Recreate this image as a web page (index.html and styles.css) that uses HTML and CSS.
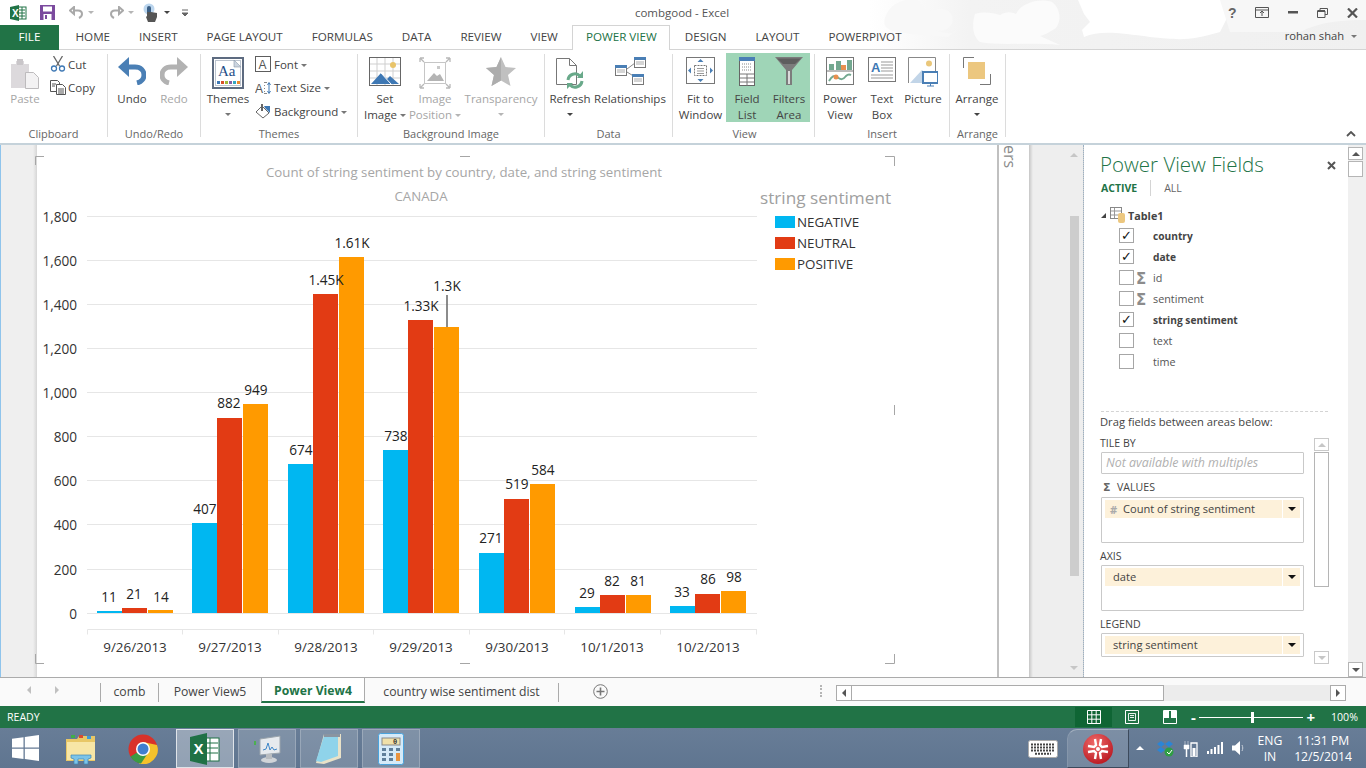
FILE: index.html
```html
<!DOCTYPE html>
<html lang="en">
<head>
    <meta charset="UTF-8">
    <title>combgood - Excel</title>
    <link rel="stylesheet" href="styles.css">
</head>
<body>
    <!-- title bar -->
    <div class="titlebar">
        <svg class="clouds" width="496" height="49" viewBox="870 0 496 49">
            <defs>
                <linearGradient id="fade" x1="0" x2="1" y1="0" y2="0">
                    <stop offset="0" stop-color="#f3f3f3" stop-opacity="0"/>
                    <stop offset="0.2" stop-color="#f3f3f3"/>
                    <stop offset="1" stop-color="#f0f0f0"/>
                </linearGradient>
            </defs>
            <rect x="870" y="0" width="496" height="49" fill="url(#fade)"/>
            <path d="M885 18C890 2 905-2 918 0C922 6 925 9 930 11C940 7 950 9 952 16C955 28 945 31 935 31C950 34 955 34 956 30L948 37C930 36 905 34 893 31C885 28 883 24 885 18Z" fill="#f8f8f8"/>
            <path d="M975 14C985 11 992 13 1000 15C1006 11 1012 12 1016 14C1022 2 1040-2 1052 2C1060 8 1062 20 1056 28C1050 32 1044 35 1040 36L1060 45C1030 42 1000 46 980 42C972 36 972 24 975 14Z" fill="#fbfbfb"/>
            <path d="M1078 0L1084 14L1090 22L1082 30L1084 37C1100 30 1120 33 1150 37C1180 40 1190 41 1220 32L1236 0Z" fill="#fff"/>
            <path d="M1220 0H1366V20C1340 20 1320 22 1300 32L1230 32Z" fill="#f7f7f7"/>
        </svg>
        <div class="qat">
            <svg class="qat-xl" width="17" height="16" viewBox="0 0 17 16"><rect x="7" y="2" width="9" height="12" fill="#fff" stroke="#217346"/><path d="M9 5h6M9 8h6M9 11h6M12 2v12" stroke="#217346"/><path d="M0 2l9-2v16l-9-2z" fill="#217346"/><text x="2" y="11.500" class="qat-x">X</text></svg>
            <svg class="qat-save" width="15" height="15" viewBox="0 0 15 15"><path d="M0 0h15v15H0z" fill="#7b4a9e"/><rect x="3" y="1.500" width="9" height="5" fill="#fff"/><rect x="3.500" y="9" width="8" height="6" fill="#fff"/><rect x="5" y="10" width="2" height="4" fill="#7b4a9e"/></svg>
            <svg class="qat-undo" width="15" height="13" viewBox="0 0 15 13"><path d="M5 1L1 4.500 5 8zM4 4.500h5c3 0 4 2 4 3.500s-1 3-3 4" fill="none" stroke="#a9a9a9" stroke-width="2"/></svg>
            <span class="qat-caret"></span>
            <svg class="qat-redo" width="15" height="13" viewBox="0 0 15 13"><path d="M10 1l4 3.500L10 8zM11 4.500H6C3 4.500 2 6.500 2 8s1 3 3 4" fill="none" stroke="#a9a9a9" stroke-width="2"/></svg>
            <span class="qat-caret"></span>
            <svg class="qat-touch" width="14" height="19" viewBox="0 0 14 19"><circle cx="6" cy="6" r="5.500" fill="#bcd6ee"/><rect x="4" y="3" width="4" height="9" rx="2" fill="#3b5f85"/><path d="M4 9v4l-1 1 2 5h7l2-5v-4l-6-1z" fill="#555"/></svg>
            <span class="qat-caret dark"></span>
            <svg class="qat-more" width="8" height="8" viewBox="0 0 8 8"><path d="M1 1h6M1 4h6l-3 3z" fill="#666" stroke="#666"/></svg>
        </div>
        <div class="doc-title">combgood - Excel</div>
        <div class="winbtns">
            <span class="help">?</span>
            <svg width="14" height="11" viewBox="0 0 14 11"><path d="M.5.500h13v10H.5zM.5 3h13" fill="none" stroke="#555"/><path d="M7 9V4M5 6l2-2 2 2" fill="none" stroke="#555"/></svg>
            <svg width="10" height="3" viewBox="0 0 10 3"><path d="M0 0h10v2.500H0z" fill="#555"/></svg>
            <svg width="11" height="10" viewBox="0 0 11 10"><path d="M3 2.500V.500h7.500v6H8M.5 3h7.500v6.500H.5z" fill="none" stroke="#555"/><path d="M.5 3h7.500" stroke="#555" stroke-width="2"/></svg>
            <svg width="11" height="10" viewBox="0 0 11 10"><path d="M1 .500l9 9M10 .500l-9 9" stroke="#555" stroke-width="2.200"/></svg>
        </div>
    </div>

    <!-- ribbon tabs -->
    <div class="tabs">
        <div class="tab file">FILE</div>
        <div class="tab">HOME</div>
        <div class="tab">INSERT</div>
        <div class="tab">PAGE LAYOUT</div>
        <div class="tab">FORMULAS</div>
        <div class="tab">DATA</div>
        <div class="tab">REVIEW</div>
        <div class="tab">VIEW</div>
        <div class="tab active">POWER VIEW</div>
        <div class="tab">DESIGN</div>
        <div class="tab">LAYOUT</div>
        <div class="tab">POWERPIVOT</div>
        <div class="user">rohan shah <span class="caret"></span></div>
    </div>

    <!-- ribbon -->
    <div class="ribbon">
        <div class="rgroup g-clip">
            <div class="rbtns">
                <div class="rbig w50 off">
                    <svg class="ic" width="30" height="32" viewBox="0 0 30 32"><path d="M1 7h5V4h8v3h5v24H1z" fill="#dcd9dc"/><rect x="7" y="2" width="6" height="6" fill="#c9c6c9"/><path d="M15.500 15.500h8l5 5v11h-13z" fill="#f3f2f3" stroke="#bdbbbd"/></svg>
                    <span>Paste</span>
                </div>
                <div class="rsmall-col">
                    <div class="rsmall">
                        <svg width="15" height="16" viewBox="0 0 15 16"><path d="M3 0l6 10M12 0L6 10" stroke="#666" stroke-width="1.300"/><circle cx="3.500" cy="12.500" r="2.500" fill="none" stroke="#3e78b4" stroke-width="1.300"/><circle cx="11.500" cy="12.500" r="2.500" fill="none" stroke="#3e78b4" stroke-width="1.300"/></svg>
                        <span>Cut</span>
                    </div>
                    <div class="rsmall">
                        <svg width="16" height="15" viewBox="0 0 16 15"><path d="M.5.500h7l2 2v9h-9z" fill="#fff" stroke="#555"/><path d="M6.500 4.500h6l3 3v7h-9z" fill="#fff" stroke="#555"/><path d="M2 4h4M2 6h3M8 9h6M8 11h6M8 13h6" stroke="#555"/></svg>
                        <span>Copy</span>
                    </div>
                </div>
            </div>
            <div class="rlabel">Clipboard</div>
        </div>

        <div class="rgroup g-undo">
            <div class="rbtns">
                <div class="rbig w48">
                    <svg class="ic" width="28" height="28" viewBox="0 0 28 28"><path d="M0 10L11 0v20z" fill="#4a7fb5"/><path d="M10 10h7c6 0 9 4 9 8s-3 7-7 8" fill="none" stroke="#4a7fb5" stroke-width="5"/></svg>
                    <span>Undo</span>
                </div>
                <div class="rbig w36 off">
                    <svg class="ic" width="28" height="28" viewBox="0 0 28 28"><path d="M28 10L17 0v20z" fill="#b2b2b2"/><path d="M18 10h-7c-6 0-9 4-9 8s3 7 7 8" fill="none" stroke="#b2b2b2" stroke-width="5"/></svg>
                    <span>Redo</span>
                </div>
            </div>
            <div class="rlabel">Undo/Redo</div>
        </div>

        <div class="rgroup g-themes">
            <div class="rbtns">
                <div class="rbig w54">
                    <svg class="ic" width="32" height="32" viewBox="0 0 32 32"><rect x="1" y="1" width="30" height="30" fill="#fff" stroke="#5d6b80" stroke-width="2"/><rect x="3.500" y="3.500" width="25" height="25" fill="none" stroke="#bcc4cf"/><path d="M22 3l7 7h-7z" fill="#ccd5e0" stroke="#8b98aa" stroke-width=".6"/><text x="6" y="19" class="ic-aa">Aa</text><path d="M5 24h3v3H5z" fill="#3e78b4"/><path d="M9 24h3v3H9z" fill="#d84f2a"/><path d="M13 24h3v3h-3z" fill="#9fb83a"/><path d="M17 24h3v3h-3z" fill="#8360a8"/><path d="M21 24h3v3h-3z" fill="#36a6c0"/><path d="M25 24h3v3h-3z" fill="#ea8a2e"/></svg>
                    <span>Themes</span>
                    <i class="caret"></i>
                </div>
                <div class="rsmall-col">
                    <div class="rsmall">
                        <svg width="16" height="16" viewBox="0 0 16 16"><rect x=".5" y=".5" width="15" height="15" fill="#fff" stroke="#5d5d5d"/><text x="3.500" y="12.500" class="ic-a">A</text></svg>
                        <span>Font<i class="caret"></i></span>
                    </div>
                    <div class="rsmall">
                        <svg width="16" height="14" viewBox="0 0 16 14"><text x="0" y="11.500" class="ic-a">A</text><path d="M9 1.500h3M9 12.500h3M9.500 4v1M9.500 7v1M9.500 10v1" stroke="#888"/><path d="M14 2v10M12.500 4L14 1.500 15.500 4M12.500 10l1.500 2.500 1.500-2.500" fill="none" stroke="#3e78b4"/></svg>
                        <span>Text Size<i class="caret"></i></span>
                    </div>
                    <div class="rsmall">
                        <svg width="16" height="16" viewBox="0 0 16 16"><path d="M1 9l6-6 7 7-6 5z" fill="#fff" stroke="#666"/><path d="M6 1h2v7H6z" fill="#666"/><path d="M9 3h6v7l-5-5z" fill="#3e78b4"/></svg>
                        <span>Background<i class="caret"></i></span>
                    </div>
                </div>
            </div>
            <div class="rlabel">Themes</div>
        </div>

        <div class="rgroup g-bg">
            <div class="rbtns">
                <div class="rbig w54">
                    <svg class="ic" width="32" height="30" viewBox="0 0 32 30"><rect x=".5" y=".5" width="31" height="28" fill="#fff" stroke="#666"/><path d="M1 7h30M1 14h30M1 21h30M8 1v27M16 1v27M24 1v27" stroke="#cfcfcf"/><circle cx="24" cy="8" r="3" fill="#e9c46a"/><path d="M2 27l10-11 6 6 3-3 9 8z" fill="#3e78b4"/><path d="M12 16l10 11" stroke="#fff"/></svg>
                    <span>Set<br>Image<i class="caret"></i></span>
                </div>
                <div class="rbig w46 off">
                    <svg class="ic" width="32" height="32" viewBox="0 0 32 32"><rect x="5.500" y="5.500" width="21" height="21" fill="#fff" stroke="#c6c6c6"/><path d="M8 24l7-8 3 3 3-2 4 7z" fill="#b4b4b4"/><rect x="18" y="9" width="3" height="3" fill="#c9c9c9"/><path d="M1 1l4 4M1 1h4M1 1v4M31 1l-4 4M31 1h-4M31 1v4M1 31l4-4M1 31h4M1 31v-4M31 31l-4-4M31 31h-4M31 31v-4" stroke="#b8b8b8" stroke-width="1.300"/></svg>
                    <span>Image<br>Position<i class="caret"></i></span>
                </div>
                <div class="rbig w86 off">
                    <svg class="ic" width="30" height="30" viewBox="0 0 30 30"><path d="M15 0l4.500 10L30 11l-8 7 2.500 11L15 23.500 5.500 29 8 18 0 11l10.500-1z" fill="#c0c0c0"/><path d="M15 0v23.500L5.500 29 8 18 0 11l10.500-1z" fill="#adadad"/></svg>
                    <span>Transparency</span>
                    <i class="caret"></i>
                </div>
            </div>
            <div class="rlabel">Background Image</div>
        </div>

        <div class="rgroup g-data">
            <div class="rbtns">
                <div class="rbig w50">
                    <svg class="ic" width="30" height="32" viewBox="0 0 30 32"><path d="M1.500 1.500h13l7 7v19h-20z" fill="#fff" stroke="#777"/><path d="M14.500 1.500v7h7" fill="none" stroke="#777"/><path d="M13 23a7 7 0 0 1 12-4M27 24a7 7 0 0 1-12 4" fill="none" stroke="#69a98a" stroke-width="3"/><path d="M28 14v7h-6zM12 32v-6h6z" fill="#69a98a"/></svg>
                    <span>Refresh</span>
                    <i class="caret dark"></i>
                </div>
                <div class="rbig w70">
                    <svg class="ic" width="31" height="28" viewBox="0 0 31 28"><path d="M12 12l8-6M12 15l8 5" stroke="#888" fill="none"/><rect x=".5" y="8.500" width="11" height="10" fill="#fff" stroke="#777"/><rect x="0" y="8" width="12" height="3" fill="#4a7fb5"/><rect x="19.500" y=".5" width="11" height="10" fill="#fff" stroke="#777"/><rect x="19" y="0" width="12" height="3" fill="#4a7fb5"/><rect x="17.500" y="17.500" width="11" height="10" fill="#fff" stroke="#777"/><rect x="17" y="17" width="12" height="3" fill="#4a7fb5"/><path d="M2 13h8M2 15h8M21 5h8M21 7h8M19 22h8M19 24h8" stroke="#aaa"/></svg>
                    <span>Relationships</span>
                </div>
            </div>
            <div class="rlabel">Data</div>
        </div>

        <div class="rgroup g-view">
            <div class="rbtns">
                <div class="rbig w51">
                    <svg class="ic" width="30" height="28" viewBox="0 0 30 28"><rect x=".5" y=".5" width="28" height="26" fill="#fff" stroke="#777"/><rect x="8.500" y="8.500" width="12" height="10" fill="#fff" stroke="#777" stroke-dasharray="2 1"/><path d="M11 11.500h7M11 14h7M11 16.500h7" stroke="#999"/><path d="M14.500 2l3 3h-6zM14.500 25l3-3h-6zM2 13.500l3-3v6zM27 13.500l-3-3v6z" fill="#4a7fb5"/></svg>
                    <span>Fit to<br>Window</span>
                </div>
                <div class="rhl">
                    <div class="rbig w42">
                        <svg class="ic" width="16" height="29" viewBox="0 0 16 29"><rect x=".5" y=".5" width="15" height="28" fill="#fff" stroke="#666"/><rect x="0" y="0" width="16" height="4" fill="#4a7fb5"/><path d="M3 7h10M3 10h10M3 13h10" stroke="#888" stroke-dasharray="1 1"/><path d="M1 17h14M1 21h14M1 25h14M8 17v12" stroke="#777"/></svg>
                        <span>Field<br>List</span>
                    </div>
                    <div class="rbig w42">
                        <svg class="ic" width="28" height="28" viewBox="0 0 28 28"><path d="M0 0h28L17 13v15h-6V13z" fill="#7c7c7c"/><path d="M2 1.500h24L20 7H8z" fill="#5e5e5e"/><rect x="13" y="14" width="2" height="13" fill="#d9d9d9"/></svg>
                        <span>Filters<br>Area</span>
                    </div>
                </div>
            </div>
            <div class="rlabel">View</div>
        </div>

        <div class="rgroup g-insert">
            <div class="rbtns">
                <div class="rbig w50">
                    <svg class="ic" width="28" height="28" viewBox="0 0 28 28"><rect x=".5" y=".5" width="27" height="27" fill="#fff" stroke="#777"/><path d="M1 14h26" stroke="#777"/><rect x="3" y="7" width="5" height="6" fill="#73a890"/><rect x="10" y="4" width="5" height="9" fill="#73a890"/><rect x="15" y="8" width="5" height="5" fill="#e98f4f"/><rect x="21" y="3" width="5" height="10" fill="#73a890"/><path d="M3 24c3-5 5-6 8-4 4 3 6 3 9-1 2-2 3-2 5-1" fill="none" stroke="#73a890" stroke-width="2"/><circle cx="10" cy="20" r="2.500" fill="#e98f4f"/></svg>
                    <span>Power<br>View</span>
                </div>
                <div class="rbig w34">
                    <svg class="ic" width="28" height="26" viewBox="0 0 28 26"><rect x=".5" y=".5" width="27" height="24" fill="#fff" stroke="#777"/><text x="3" y="14.500" class="ic-boxa">A</text><path d="M13 5h12M13 8h12M13 11h12M13 14h12M3 18h22M3 21h22" stroke="#999"/></svg>
                    <span>Text<br>Box</span>
                </div>
                <div class="rbig w48">
                    <svg class="ic" width="30" height="30" viewBox="0 0 30 30"><path d="M.5 26V.5h27V15" fill="none" stroke="#888"/><circle cx="21" cy="6.500" r="3" fill="#eac77a"/><path d="M2 26l12-13 5 5v8z" fill="#c2d5e8"/><rect x="15" y="15" width="15" height="11" fill="#fff" stroke="#4a7fb5" stroke-width="2"/><path d="M22.500 26v3M19 29h7" stroke="#4a7fb5"/></svg>
                    <span>Picture</span>
                </div>
            </div>
            <div class="rlabel">Insert</div>
        </div>

        <div class="rgroup g-arrange">
            <div class="rbtns">
                <div class="rbig w54">
                    <svg class="ic" width="28" height="28" viewBox="0 0 28 28"><path d="M.5 11V.5H11M17 27.500h10.500V17" fill="none" stroke="#777"/><rect x="5" y="5" width="17" height="17" fill="#ecc77f"/></svg>
                    <span>Arrange</span>
                    <i class="caret dark"></i>
                </div>
            </div>
            <div class="rlabel">Arrange</div>
        </div>

        <svg class="collapse" width="10" height="6" viewBox="0 0 10 6"><path d="M1 5l4-4 4 4" fill="none" stroke="#555" stroke-width="1.800"/></svg>
    </div>

    <!-- power view sheet -->
    <div class="workspace">
        <div class="strip-left"></div>
        <div class="canvas">
            <svg class="chart" width="960" height="535" viewBox="37 143 960 535">
                <text x="464" y="177" class="c-title">Count of string sentiment by country, date, and string sentiment</text>
                <text x="421" y="201" class="c-title">CANADA</text>

                <g class="grid">
                    <path d="M87 216.500H757M87 260.500H757M87 304.500H757M87 348.500H757M87 392.500H757M87 436.500H757M87 480.500H757M87 524.500H757M87 569.500H757M87 613.500H757"/>
                    <path d="M87.500 629.500H757M87.500 629.500v5M182.500 629.500v5M278.500 629.500v5M373.500 629.500v5M469.500 629.500v5M564.500 629.500v5M660.500 629.500v5M756.500 629.500v5"/>
                </g>

                <g class="yaxis">
                    <text x="77" y="222">1,800</text>
                    <text x="77" y="266">1,600</text>
                    <text x="77" y="310">1,400</text>
                    <text x="77" y="354">1,200</text>
                    <text x="77" y="398">1,000</text>
                    <text x="77" y="442">800</text>
                    <text x="77" y="486">600</text>
                    <text x="77" y="530">400</text>
                    <text x="77" y="575">200</text>
                    <text x="77" y="619">0</text>
                </g>

                <g class="neg">
                    <rect x="97" y="611" width="25" height="2"/>
                    <rect x="192" y="523" width="25" height="90"/>
                    <rect x="288" y="464" width="25" height="149"/>
                    <rect x="383" y="450" width="25" height="163"/>
                    <rect x="479" y="553" width="25" height="60"/>
                    <rect x="575" y="607" width="25" height="6"/>
                    <rect x="670" y="606" width="25" height="7"/>
                </g>
                <g class="neu">
                    <rect x="122" y="608" width="25" height="5"/>
                    <rect x="217" y="418" width="25" height="195"/>
                    <rect x="313" y="294" width="25" height="319"/>
                    <rect x="408" y="320" width="25" height="293"/>
                    <rect x="504" y="499" width="25" height="114"/>
                    <rect x="600" y="595" width="25" height="18"/>
                    <rect x="695" y="594" width="25" height="19"/>
                </g>
                <g class="pos">
                    <rect x="148" y="610" width="25" height="3"/>
                    <rect x="243" y="404" width="25" height="209"/>
                    <rect x="339" y="257" width="25" height="356"/>
                    <rect x="434" y="327" width="25" height="286"/>
                    <rect x="530" y="484" width="25" height="129"/>
                    <rect x="626" y="595" width="25" height="18"/>
                    <rect x="721" y="591" width="25" height="22"/>
                </g>
                <path class="leader" d="M447 295V327"/>

                <g class="vals">
                    <text x="109" y="602">11</text>
                    <text x="134" y="599">21</text>
                    <text x="161" y="602">14</text>
                    <text x="205" y="514">407</text>
                    <text x="229" y="408">882</text>
                    <text x="256" y="395">949</text>
                    <text x="301" y="455">674</text>
                    <text x="326" y="285">1.45K</text>
                    <text x="352" y="248">1.61K</text>
                    <text x="396" y="441">738</text>
                    <text x="421" y="311">1.33K</text>
                    <text x="447" y="291">1.3K</text>
                    <text x="491" y="543">271</text>
                    <text x="517" y="489">519</text>
                    <text x="543" y="475">584</text>
                    <text x="587" y="598">29</text>
                    <text x="612" y="586">82</text>
                    <text x="638" y="586">81</text>
                    <text x="682" y="597">33</text>
                    <text x="708" y="584">86</text>
                    <text x="734" y="582">98</text>
                </g>

                <g class="xaxis">
                    <text x="135" y="652">9/26/2013</text>
                    <text x="230" y="652">9/27/2013</text>
                    <text x="326" y="652">9/28/2013</text>
                    <text x="421" y="652">9/29/2013</text>
                    <text x="517" y="652">9/30/2013</text>
                    <text x="612" y="652">10/1/2013</text>
                    <text x="708" y="652">10/2/2013</text>
                </g>

                <text x="760" y="204" class="l-title">string sentiment</text>
                <rect class="neg" x="775" y="216" width="20" height="12"/>
                <rect class="neu" x="775" y="237" width="20" height="12"/>
                <rect class="pos" x="775" y="258" width="20" height="12"/>
                <text x="797" y="227" class="l-item">NEGATIVE</text>
                <text x="797" y="248" class="l-item">NEUTRAL</text>
                <text x="797" y="269" class="l-item">POSITIVE</text>

                <path class="marks" d="M44 156.500H35.500V165M460 156.500H470M885 156.500H894.500V166M894.500 405V415M885 663.500H894.500V654M460 663.500H470M44 663.500H35.500V654"/>
            </svg>
        </div>
        <div class="filters"><span class="filters-label">ers</span></div>
        <div class="view-scroll">
            <i class="arrow up"></i>
            <div class="view-thumb"></div>
            <i class="arrow down"></i>
        </div>
        <div class="fields">
            <div class="fields-head">
                <div class="fields-title">Power View Fields</div>
                <svg class="fields-close" width="9" height="9" viewBox="0 0 9 9"><path d="M1 1l7 7M8 1L1 8" stroke="#555" stroke-width="2"/></svg>
            </div>
            <div class="fields-tabs"><span class="ft-on">ACTIVE</span><span class="ft-off">ALL</span></div>
            <div class="tree-head">
                <i class="tree-caret"></i>
                <svg width="17" height="16" viewBox="0 0 17 16"><rect x=".5" y=".5" width="11" height="11" fill="#fff" stroke="#888"/><path d="M1 4h10M1 8h10M4.500 1v10" stroke="#999"/><rect x="8" y="6" width="7" height="10" rx="2" fill="#ecc77f"/></svg>
                <span>Table1</span>
            </div>
            <div class="field-list">
                <div class="field on"><i class="cb">✓</i><i class="sig"></i><span>country</span></div>
                <div class="field on"><i class="cb">✓</i><i class="sig"></i><span>date</span></div>
                <div class="field"><i class="cb"></i><i class="sig">Σ</i><span>id</span></div>
                <div class="field"><i class="cb"></i><i class="sig">Σ</i><span>sentiment</span></div>
                <div class="field on"><i class="cb">✓</i><i class="sig"></i><span>string sentiment</span></div>
                <div class="field"><i class="cb"></i><i class="sig"></i><span>text</span></div>
                <div class="field"><i class="cb"></i><i class="sig"></i><span>time</span></div>
            </div>
            <div class="dash"></div>
            <div class="drag-hint">Drag fields between areas below:</div>
            <div class="areas">
                <div class="wells">
                    <div class="well-label">TILE BY</div>
                    <div class="well well-sm"><em>Not available with multiples</em></div>
                    <div class="well-label vals-label"><i class="sig-sm">Σ</i>VALUES</div>
                    <div class="well well-lg">
                        <div class="chip"><span class="hash">#</span><span class="chip-t">Count of string sentiment</span><i class="chip-c"></i></div>
                    </div>
                    <div class="well-label">AXIS</div>
                    <div class="well well-lg">
                        <div class="chip"><span class="chip-t ind">date</span><i class="chip-c"></i></div>
                    </div>
                    <div class="well-label">LEGEND</div>
                    <div class="well well-md">
                        <div class="chip"><span class="chip-t ind">string sentiment</span><i class="chip-c"></i></div>
                    </div>
                </div>
                <div class="well-scroll">
                    <div class="sbtn"><i class="arrow up"></i></div>
                    <div class="sthumb"></div>
                    <div class="sbtn last"><i class="arrow down"></i></div>
                </div>
            </div>
        </div>
        <div class="outer-scroll">
            <div class="osbtn"><i class="arrow up dark"></i></div>
            <div class="osthumb"></div>
            <div class="osbtn last"><i class="arrow down dark"></i></div>
        </div>
    </div>

    <!-- sheet tabs -->
    <div class="sheetbar">
        <div class="sheet-nav"><i class="nav-l"></i><i class="nav-r"></i></div>
        <div class="stab s-comb">comb</div>
        <div class="stab s-pv5">Power View5</div>
        <div class="stab s-pv4">Power View4</div>
        <div class="stab s-cws">country wise sentiment dist</div>
        <svg class="add-sheet" width="15" height="15" viewBox="0 0 15 15"><circle cx="7.500" cy="7.500" r="6.800" fill="none" stroke="#777"/><path d="M7.500 3.500v8M3.500 7.500h8" stroke="#777" stroke-width="1.600"/></svg>
        <div class="grip"></div>
        <div class="hscroll">
            <div class="hbtn"><i class="nav-l dark"></i></div>
            <div class="hthumb"></div>
            <div class="hbtn end"><i class="nav-r dark"></i></div>
        </div>
    </div>

    <!-- status bar -->
    <div class="statusbar">
        <span class="ready">READY</span>
        <div class="vbtn active">
            <svg width="14" height="14" viewBox="0 0 14 14"><path d="M.5.500h13v13H.5zM.5 4.800h13M.5 9.200h13M4.800.5v13M9.200.5v13" fill="none" stroke="#fff"/></svg>
        </div>
        <div class="vbtn">
            <svg width="14" height="14" viewBox="0 0 14 14"><path d="M.5.500h13v13H.5z" fill="none" stroke="#fff"/><path d="M3.500 3.500h7v7h-7zM5 5.500h4M5 7.500h4" fill="none" stroke="#fff" stroke-width=".9"/></svg>
        </div>
        <div class="vbtn">
            <svg width="14" height="14" viewBox="0 0 14 14"><path d="M.5.500h13v13H.5z" fill="none" stroke="#fff"/><path d="M1 1h5v7H1zM8 1h5v7H8z" fill="#fff"/></svg>
        </div>
        <div class="zoom">
            <span class="z-sign">-</span>
            <div class="z-track"><i class="z-handle"></i></div>
            <span class="z-sign">+</span>
        </div>
        <span class="z-pct">100%</span>
    </div>

    <!-- windows taskbar -->
    <div class="taskbar">
        <svg class="tb-start" width="27" height="26" viewBox="0 0 27 26"><path d="M0 3.800l11.500-1.600v10.300H0zM12.800 2L27 0v12.500H12.800zM0 13.800h11.500v10.300L0 22.500zM12.800 13.800H27V26l-14.200-2z" fill="#fff"/></svg>
        <div class="tb-app t-exp">
            <svg width="32" height="32" viewBox="0 0 32 32"><path d="M1 6h11l2-3h16v25H1z" fill="#e8c766"/><path d="M2 9h28v18H2z" fill="#f7e6a6"/><rect x="6" y="2" width="4" height="3" fill="#3fae49"/><rect x="14" y="2" width="4" height="3" fill="#d84a30"/><rect x="22" y="3" width="4" height="3" fill="#3e9ad6"/><path d="M6 22h20v3l-3 1v5h-4v-5h-6v5H9v-5l-3-1z" fill="#7cc4e8" stroke="#3e86b8" stroke-width=".7"/></svg>
        </div>
        <div class="tb-app t-chr">
            <svg width="30" height="30" viewBox="0 0 30 30"><circle cx="15" cy="15" r="14.500" fill="#d8322a"/><path d="M15 15L2.500 22.500A14.500 14.500 0 0 0 15 29.500z" fill="#3a9b44"/><path d="M15 15l-4 14.500A14.500 14.500 0 0 0 29 11L15 8z" fill="#f4c22b"/><path d="M15 15L2.500 22.500 8 10z" fill="#d8322a"/><path d="M15 15L3 22.500A14.500 14.500 0 0 0 13 29.500l6-9z" fill="#3a9b44"/><circle cx="15" cy="15" r="7" fill="#fff"/><circle cx="15" cy="15" r="5.500" fill="#3f7fd0"/></svg>
        </div>
        <div class="tb-btn active">
            <svg width="30" height="32" viewBox="0 0 30 32"><rect x="13" y="5" width="16" height="23" fill="#fff" stroke="#1f7145"/><path d="M14 10h14M14 15h14M14 20h14M20 5v23" stroke="#1f7145"/><path d="M0 4L17 0v32L0 28z" fill="#1f7145"/><text x="3.500" y="21" class="tb-x">X</text></svg>
        </div>
        <div class="tb-btn">
            <svg width="30" height="32" viewBox="0 0 30 32"><path d="M8 6l20-3v17l-20 2z" fill="#e6eaee" stroke="#9aa4ac"/><path d="M11 17l3-1 2-6 2 7 2-3 2 3 3-1" fill="none" stroke="#3e86c8"/><ellipse cx="17" cy="27" rx="8" ry="3" fill="#d0d4d8"/><rect x="14" y="21" width="6" height="5" fill="#b8bcc0"/><rect x="2" y="8" width="2" height="4" fill="#4caf50"/></svg>
        </div>
        <div class="tb-btn">
            <svg width="30" height="32" viewBox="0 0 30 32"><path d="M10 1h17v24l-17 6-8-1z" fill="#e9e2c8"/><path d="M10 3h14v20L7 29l-5-1z" fill="#8fd3ea"/><path d="M10 1h16v3H10z" fill="#8a94a0"/></svg>
        </div>
        <div class="tb-btn">
            <svg width="26" height="32" viewBox="0 0 26 32"><rect x=".5" y=".5" width="25" height="31" rx="2" fill="#d5eaf8" stroke="#4aa3dc"/><rect x="4" y="5" width="18" height="7" fill="#f0e0a8" stroke="#888"/><text x="15" y="11" class="tb-zero">0</text><path d="M4 15h4v3H4zM11 15h4v3h-4zM18 15h4v3h-4zM4 20h4v3H4zM11 20h4v3h-4zM4 25h4v3H4zM11 25h4v3h-4z" fill="#5f7f9a"/><path d="M18 20h4v8h-4z" fill="#e9943f"/></svg>
        </div>
        <div class="tb-kbd">
            <svg width="30" height="18" viewBox="0 0 30 18"><rect x=".5" y=".5" width="29" height="17" rx="2" fill="#fff" stroke="#aaa"/><path d="M3 4.500h24M3 7.500h24M3 10.500h24M7 13.800h16" stroke="#444" stroke-width="2" stroke-dasharray="2 1"/></svg>
        </div>
        <div class="tb-red">
            <svg width="30" height="30" viewBox="0 0 30 30"><defs><radialGradient id="red" cx=".4" cy=".3" r=".8"><stop offset="0" stop-color="#f06a6a"/><stop offset="1" stop-color="#b5121b"/></radialGradient></defs><circle cx="15" cy="15" r="15" fill="url(#red)"/><path d="M12 5l1 6-2 2-6-1M18 5l-1 6 2 2 6-1M12 25l1-6-2-2-6 1M18 25l-1-6 2-2 6 1" fill="none" stroke="#fff" stroke-width="2.400"/><circle cx="15" cy="15" r="2" fill="#fff"/></svg>
        </div>
        <div class="tray">
            <i class="tray-up"></i>
            <svg width="17" height="17" viewBox="0 0 17 17"><path d="M4 1l4 3-4 3-4-3zM12 1l4 3-4 3-4-3zM4 7l4 3-4 3-4-3zM12 7l4 3-4 3-4-3z" fill="#2b85d6"/><circle cx="12" cy="12" r="4.500" fill="#2f9e44"/><path d="M10 12l2 2 3-4" fill="none" stroke="#fff"/></svg>
            <svg width="15" height="17" viewBox="0 0 15 17"><path d="M2 1v4M5 1v4M1 5h5v4H4v8H3V9H1z" fill="#fff" stroke="#fff" stroke-width=".5"/><path d="M8 3h6v14H8z" fill="none" stroke="#fff" stroke-width="1.300"/><path d="M9.500 8h3v8h-3z" fill="#fff"/></svg>
            <svg width="16" height="12" viewBox="0 0 16 12"><path d="M0 9h2v3H0zM3.500 7h2v5h-2zM7 5h2v7H7zM10.500 3h2v9h-2zM14 0h2v12h-2z" fill="#fff"/></svg>
            <svg width="12" height="14" viewBox="0 0 12 14"><path d="M0 4.500h3L8 0v14L3 9.500H0z" fill="#fff"/><path d="M10 4c1 2 1 4 0 6" fill="none" stroke="#c8d0da"/></svg>
        </div>
        <div class="lang">ENG<br>IN</div>
        <div class="clock">11:31 PM<br>12/5/2014</div>
    </div>
</body>
</html>
```

FILE: styles.css
```css
* {
    box-sizing: border-box;
}
html, body {
    margin: 0;
    padding: 0;
}
body {
    width: 1366px;
    height: 768px;
    overflow: hidden;
    display: flex;
    flex-direction: column;
    font-family: "Open Sans", "Noto Sans", sans-serif;
    font-size: 11.5px;
    color: #444;
    background: #fff;
}
i {
    font-style: normal;
}

/* title bar */
.titlebar {
    height: 25px;
    position: relative;
    display: flex;
    align-items: center;
    flex: none;
}
.clouds {
    position: absolute;
    left: 870px;
    top: 0;
}
.qat {
    display: flex;
    align-items: center;
    position: relative;
    padding-left: 10px;
    width: 400px;
}
.qat-x { font: bold 10px "Liberation Sans", sans-serif; fill: #fff; }
.qat-save { margin-left: 13px; }
.qat-undo { margin-left: 14px; }
.qat-redo { margin-left: 15px; }
.qat-touch { margin-left: 9px; }
.qat-more { margin-left: 11px; }
.qat-caret {
    margin-left: 4px;
    border-left: 3px solid transparent;
    border-right: 3px solid transparent;
    border-top: 3px solid #b5b5b5;
}
.qat-caret.dark { border-top-color: #444; margin-left: 7px; }
.doc-title {
    position: relative;
    width: 564px;
    text-align: center;
    font-size: 11.5px;
    color: #555;
}
.winbtns {
    position: absolute;
    right: 8px;
    top: 6px;
    display: flex;
    align-items: center;
    justify-content: space-between;
    width: 130px;
    height: 13px;
}
.help { font: bold 14px "Liberation Sans", sans-serif; color: #666; }

/* ribbon tabs */
.tabs {
    height: 25px;
    flex: none;
    display: flex;
    position: relative;
    border-bottom: 1px solid #d4d4d4;
}
.tab {
    height: 25px;
    padding: 3px 14.5px 0;
    font-size: 11.65px;
    line-height: 18px;
    color: #444;
}
.tab.file {
    width: 59px;
    padding: 3px 0 0;
    text-align: center;
    background: #217346;
    color: #fff;
    margin-right: 2px;
}
.tab.active {
    background: #fff;
    border: 1px solid #d4d4d4;
    border-bottom: none;
    color: #217346;
    padding: 2px 12.5px 0;
}
.user {
    position: absolute;
    right: 9px;
    top: 3px;
    font-size: 11.2px;
    line-height: 16px;
}
.user .caret { margin-left: 4px; vertical-align: 2px; }

/* ribbon */
.ribbon {
    height: 93px;
    flex: none;
    display: flex;
    position: relative;
    align-items: flex-start;
}
.rgroup {
    margin-top: 4px;
    height: 83px;
    border-right: 1px solid #dcdcdc;
    display: flex;
    flex-direction: column;
    flex: none;
}
.g-clip { width: 108px; }
.g-undo { width: 93px; }
.g-themes { width: 157px; }
.g-bg { width: 187px; }
.g-data { width: 128px; }
.g-view { width: 142px; padding-left: 2px; }
.g-insert { width: 135px; }
.g-arrange { width: 56px; }
.rbtns {
    height: 73px;
    display: flex;
}
.rlabel {
    line-height: 14px;
    text-align: center;
    font-size: 11px;
    color: #666;
}
.rbig {
    position: relative;
    height: 73px;
    display: flex;
    flex-direction: column;
    align-items: center;
    flex: none;
    padding-top: 3px;
    line-height: 16px;
    text-align: center;
}
.rbig > span {
    position: absolute;
    top: 37px;
    left: -10px;
    right: -10px;
}
.rbig > .caret {
    position: absolute;
    top: 59px;
    margin: 0;
}
.off { color: #a6a6a6; }
.w34 { width: 34px; }
.w36 { width: 36px; }
.w42 { width: 42px; }
.w46 { width: 46px; }
.w48 { width: 48px; }
.w50 { width: 50px; }
.w51 { width: 51px; }
.w54 { width: 54px; }
.w70 { width: 70px; }
.w86 { width: 86px; }
.rhl {
    display: flex;
    height: 69px;
    margin-top: -1px;
    padding-top: 1px;
    background: #9fd5b7;
}
.rhl .rbig { height: 68px; }
.rsmall-col {
    display: flex;
    flex-direction: column;
    gap: 3.5px;
}
.rsmall {
    height: 20px;
    display: flex;
    align-items: center;
    gap: 3px;
}
.g-clip .rsmall { gap: 2px; }
.rsmall svg { flex: none; width: 16px; }
.caret {
    display: inline-block;
    margin-left: 3px;
    vertical-align: 2px;
    border-left: 3px solid transparent;
    border-right: 3px solid transparent;
    border-top: 3px solid #777;
}
.caret.dark { border-top-color: #444; }
.off .caret { border-top-color: #b5b5b5; }
.collapse {
    position: absolute;
    right: 10px;
    top: 81px;
}

/* main area */
.workspace {
    height: 535px;
    flex: none;
    display: flex;
    border-top: 2px solid #c5d2da;
    border-bottom: 1px solid #ababab;
    overflow: hidden;
}
.strip-left {
    width: 37px;
    background: linear-gradient(to right, #8fc4ec 0, #8fc4ec 1px, #efefef 1px, #efefef 33px, #d6d6d6 37px);
}
.canvas {
    width: 960px;
    margin-top: -2px;
    flex: none;
    background: #fff;
}
.chart {
    display: block;
    overflow: visible;
    font-family: "Open Sans", sans-serif;
}
.c-title {
    font-size: 13.25px;
    fill: #a6a6a6;
    text-anchor: middle;
}
.grid path { fill: none; stroke: #e6e6e6; }
.yaxis text { font-size: 13.6px; fill: #333; text-anchor: end; }
.xaxis text { font-size: 13.4px; fill: #333; text-anchor: middle; }
.vals text { font-size: 13.6px; fill: #222; text-anchor: middle; }
.neg { fill: #00b7f1; }
.neu { fill: #e23b14; }
.pos { fill: #ff9a00; }
.leader { stroke: #666; stroke-width: 1.5; fill: none; }
.l-title { font-size: 17.2px; fill: #a0a0a0; }
.l-item { font-size: 13.4px; fill: #333; }
.marks { fill: none; stroke: #a6a6a6; }

.filters {
    width: 32px;
    flex: none;
    border-left: 2px solid #c0c0c0;
    overflow: hidden;
    position: relative;
}
.filters-label {
    display: block;
    margin-left: 1px;
    writing-mode: vertical-rl;
    font-size: 16px;
    line-height: 20px;
    color: #8a8a8a;
}
.view-scroll {
    width: 55px;
    flex: none;
    background: linear-gradient(to right, #c6c6c6 0, #eeeeee 4px);
    position: relative;
    border-right: 1px dotted #9ab0c4;
    display: flex;
    flex-direction: column;
    align-items: flex-end;
    padding: 8px 4px 7px 0;
}
.view-thumb {
    width: 9px;
    height: 360px;
    margin: 59px 0 auto;
    background: #cdcdcd;
}
.arrow {
    display: block;
    width: 0;
    border-left: 4px solid transparent;
    border-right: 4px solid transparent;
}
.arrow.up { border-bottom: 4px solid #c6c6c6; }
.arrow.down { border-top: 4px solid #c6c6c6; }
.arrow.up.dark { border-bottom-color: #555; }
.arrow.down.dark { border-top-color: #555; }
.view-scroll .arrow { margin-right: 1px; }

/* field list */
.fields {
    width: 264px;
    flex: none;
    background: #fff;
    padding-top: 7px;
}
.fields-head {
    height: 24px;
    padding-left: 16px;
    display: flex;
    align-items: center;
    position: relative;
}
.fields-title {
    font-size: 20.5px;
    font-weight: 300;
    color: #217346;
    white-space: nowrap;
}
.fields-close {
    position: absolute;
    left: 243px;
    top: 9px;
}
.fields-tabs {
    margin-top: 4px;
    height: 16px;
    padding-left: 17px;
    display: flex;
    align-items: center;
    font-size: 10.5px;
}
.ft-on {
    font-weight: 700;
    color: #217346;
    padding-right: 13px;
    border-right: 1px solid #d4d4d4;
    line-height: 16px;
}
.ft-off {
    margin-left: 13px;
    color: #666;
}
.tree-head {
    margin-top: 11px;
    height: 16px;
    display: flex;
    align-items: center;
    padding-left: 17px;
    font-size: 10.8px;
    font-weight: 700;
}
.tree-head span { margin-left: 1px; }
.tree-caret {
    width: 0;
    margin-right: 4px;
    border-left: 5px solid transparent;
    border-bottom: 5px solid #444;
}
.field-list { margin-top: 2px; }
.field {
    height: 21px;
    padding-left: 35px;
    display: flex;
    align-items: center;
    font-size: 10.8px;
    color: #555;
}
.field.on span { font-weight: 700; font-size: 10.2px; color: #444; }
.cb {
    width: 15px;
    height: 15px;
    flex: none;
    border: 1px solid #a6a6a6;
    color: #111;
    font: bold 13px/13px "DejaVu Sans", sans-serif;
    text-align: center;
    background: #fff;
}
.sig {
    width: 19px;
    height: 15px;
    flex: none;
    padding: 2px 0 0 2px;
    font: bold 15px/15px "DejaVu Sans", sans-serif;
    color: #8c8c8c;
}
.dash {
    margin: 39px 20px 0 17px;
    border-top: 1px dashed #d4d4d4;
}
.drag-hint {
    margin: 3px 0 0 16px;
    line-height: 14px;
    font-size: 11.2px;
    color: #444;
}
.areas {
    display: flex;
    margin: 7px 0 0 16px;
}
.wells { width: 204px; flex: none; }
.well-label {
    height: 14px;
    line-height: 14px;
    font-size: 10.6px;
    color: #444;
}
.vals-label {
    height: 15px;
    margin-top: 6px;
    padding-left: 3px;
    display: flex;
}
.sig-sm {
    width: 14px;
    font: bold 11px/15px "DejaVu Sans", sans-serif;
    color: #666;
}
.well {
    margin: 2px 0 6px 1px;
    width: 203px;
    border: 1px solid #c9c9c9;
    padding: 2px 3px;
    border-radius: 1px;
}
.well-sm {
    height: 22px;
    padding: 0 4px;
    line-height: 20px;
    font-size: 12.4px;
    color: #b0b0b0;
}
.well-lg { height: 46px; }
.well-md { height: 24px; }
.chip {
    height: 18px;
    display: flex;
    align-items: center;
    background: #fdf1da;
    font-size: 11.1px;
    color: #444;
}
.hash {
    width: 18px;
    flex: none;
    padding-left: 5px;
    font-weight: 700;
    color: #aaa;
}
.chip-t { flex: 1; margin-top: -2px; }
.chip-t.ind { padding-left: 8px; }
.chip-c {
    width: 18px;
    height: 18px;
    flex: none;
    border-left: 1px solid #fff;
    position: relative;
}
.chip-c::after {
    content: "";
    position: absolute;
    left: 5px;
    top: 7px;
    border-left: 4px solid transparent;
    border-right: 4px solid transparent;
    border-top: 4px solid #111;
}
.well-scroll {
    margin: 2px 0 0 10px;
    width: 15px;
    height: 226px;
    display: flex;
    flex-direction: column;
}
.sbtn {
    height: 13px;
    border: 1px solid #c9c9c9;
    display: flex;
    align-items: center;
    justify-content: center;
    flex: none;
}
.sbtn.last { margin-top: auto; }
.sthumb {
    height: 135px;
    margin-top: 1px;
    border: 1px solid #b5b5b5;
    flex: none;
}
.outer-scroll {
    width: 18px;
    flex: none;
    background: #f0f0f0;
    padding-top: 2px;
    display: flex;
    flex-direction: column;
}
.osbtn {
    width: 15px;
    height: 13px;
    flex: none;
    background: #fff;
    border: 1px solid #b5b5b5;
    display: flex;
    align-items: center;
    justify-content: center;
}
.osbtn.last { margin-top: auto; height: 15px; }
.osthumb {
    width: 15px;
    height: 16px;
    margin-top: 1px;
    background: #fff;
    border: 1px solid #b5b5b5;
}

/* sheet tabs */
.sheetbar {
    height: 28px;
    flex: none;
    display: flex;
    background: #fafafa;
    position: relative;
    align-items: flex-start;
}
.sheet-nav {
    width: 100px;
    height: 24px;
    display: flex;
    align-items: center;
    padding-left: 27px;
    gap: 24px;
}
.nav-l, .nav-r {
    width: 0;
    display: block;
    border-top: 4px solid transparent;
    border-bottom: 4px solid transparent;
}
.nav-l { border-right: 4px solid #c0c0c0; }
.nav-r { border-left: 4px solid #c0c0c0; }
.nav-l.dark { border-right-color: #555; }
.nav-r.dark { border-left-color: #555; }
.stab {
    margin-top: 5px;
    height: 19px;
    line-height: 17px;
    text-align: center;
    font-size: 12.2px;
    color: #444;
    border-left: 1px solid #ababab;
    flex: none;
}
.s-comb { width: 58px; }
.s-pv5 { width: 103px; }
.s-pv4 {
    margin-top: 0;
    width: 104px;
    height: 25px;
    line-height: 26px;
    background: #fff;
    color: #217346;
    font-weight: 700;
    border-left: 1px solid #ababab;
    border-right: 1px solid #ababab;
    border-bottom: 2px solid #217346;
}
.s-cws {
    width: 194px;
    border-left: none;
    border-right: 1px solid #ababab;
}
.add-sheet {
    margin: 6px 0 0 34px;
    flex: none;
}
.grip {
    margin: 7px 0 0 212px;
    width: 2px;
    height: 12px;
    border-left: 2px dotted #b5b5b5;
}
.hscroll {
    position: absolute;
    left: 836px;
    top: 7px;
    width: 510px;
    height: 16px;
    background: #ececec;
    display: flex;
}
.hbtn {
    width: 16px;
    flex: none;
    background: #fff;
    border: 1px solid #ababab;
    display: flex;
    align-items: center;
    justify-content: center;
}
.hbtn.end { margin-left: auto; }
.hthumb {
    width: 312px;
    border: 1px solid #ababab;
    border-left: 0;
    background: #fff;
}

/* status bar */
.statusbar {
    height: 22px;
    flex: none;
    background: #217346;
    color: #fff;
    display: flex;
    align-items: center;
    font-size: 10.6px;
    position: relative;
}
.ready {
    padding-left: 7px;
    width: 1075px;
    flex: none;
}
.vbtn {
    width: 37px;
    height: 20px;
    margin-right: 1px;
    display: flex;
    align-items: center;
    justify-content: center;
}
.vbtn.active { background: #0f6534; }
.zoom {
    margin-left: 2px;
    display: flex;
    align-items: center;
    gap: 3px;
    width: 124px;
}
.z-sign {
    font-size: 15px;
    font-weight: 700;
    line-height: 16px;
}
.z-track {
    flex: 1;
    height: 1px;
    background: #fff;
    position: relative;
}
.z-handle {
    position: absolute;
    left: 52px;
    top: -5px;
    width: 3px;
    height: 11px;
    background: #fff;
}
.z-pct { margin-left: 16px; font-size: 10.6px; }

/* windows taskbar */
.taskbar {
    height: 40px;
    flex: none;
    display: flex;
    align-items: flex-end;
    position: relative;
    background: linear-gradient(to bottom, #687d97, #5f7590);
    color: #fff;
}
.tb-start { margin: 0 0 7px 12px; flex: none; }
.tb-app {
    height: 39px;
    display: flex;
    align-items: center;
    justify-content: center;
    flex: none;
}
.t-exp { width: 60px; margin-left: 12px; }
.t-chr { width: 30px; margin: 0 18px 0 17px; }
.tb-btn {
    width: 58px;
    height: 39px;
    margin-right: 4px;
    display: flex;
    align-items: center;
    justify-content: center;
    background: rgba(255, 255, 255, 0.16);
    border: 1px solid rgba(255, 255, 255, 0.22);
    flex: none;
}
.tb-btn.active {
    background: rgba(255, 255, 255, 0.32);
    border-color: rgba(255, 255, 255, 0.7);
}
.tb-x { font: bold 15px "Liberation Sans", sans-serif; fill: #fff; }
.tb-zero { font: bold 7px "Liberation Mono", monospace; fill: #333; }
.tb-kbd {
    margin: 0 9px 10px auto;
    display: flex;
    flex: none;
}
.tb-red {
    width: 62px;
    height: 39px;
    flex: none;
    display: flex;
    align-items: center;
    justify-content: center;
    background: rgba(255, 255, 255, 0.14);
    border-top-left-radius: 10px;
    border: 1px solid rgba(255, 255, 255, 0.3);
    border-bottom: 1px solid #3c4a5c;
    border-left-color: rgba(255, 255, 255, 0.1);
    border-right-color: #3c4a5c;
}
.tray {
    width: 118px;
    height: 40px;
    display: flex;
    align-items: center;
    padding-left: 7px;
    gap: 9px;
    flex: none;
}
.tray-up {
    width: 0;
    margin-right: 4px;
    border-left: 4px solid transparent;
    border-right: 4px solid transparent;
    border-bottom: 4px solid #fff;
}
.lang, .clock {
    height: 40px;
    padding-top: 5px;
    text-align: center;
    font-size: 12.2px;
    line-height: 16px;
    flex: none;
}
.lang { width: 44px; margin-left: 1px; }
.clock { width: 62px; margin-right: 12px; }

/* little letters inside icons */
.ic-aa { font: 15px "Liberation Serif", serif; fill: #1f4e88; }
.ic-a { font: 12px "Liberation Sans", sans-serif; fill: #555; }
.ic-boxa { font: bold 13px "Liberation Sans", sans-serif; fill: #3e78b4; }
```
